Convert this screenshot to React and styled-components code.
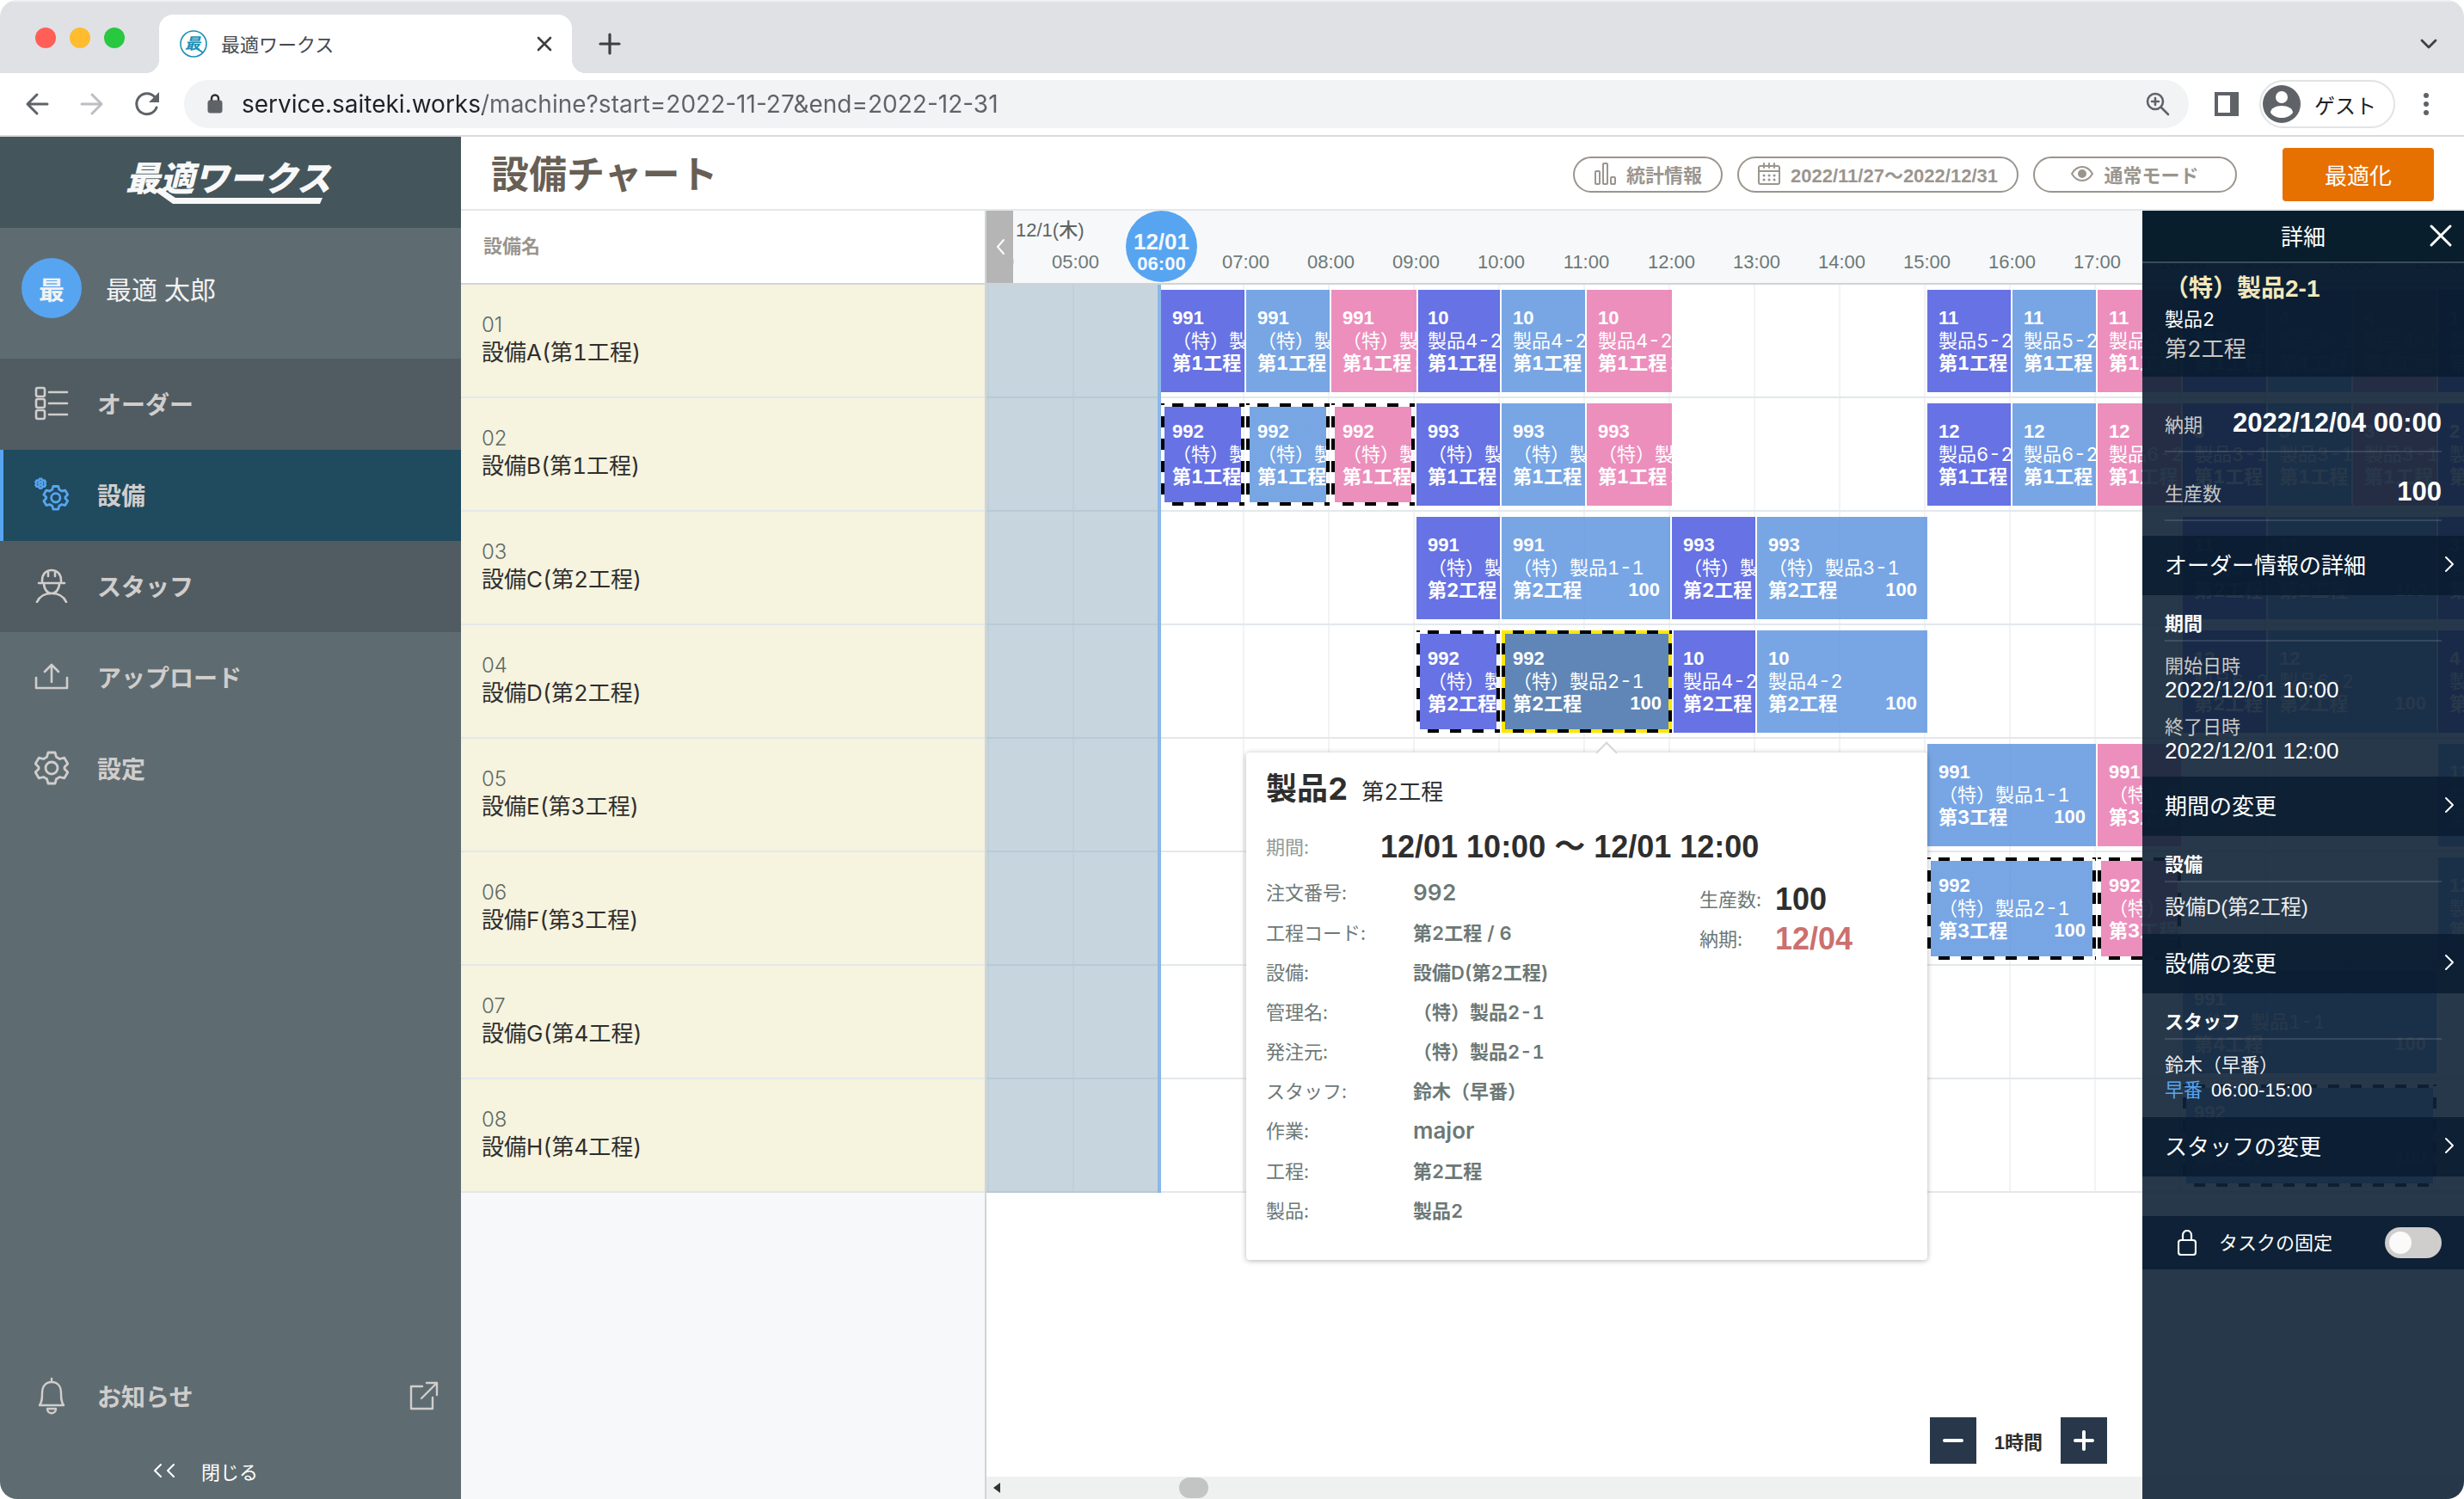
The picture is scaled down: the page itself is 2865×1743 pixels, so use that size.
import React from 'react';
import styled, { createGlobalStyle, css } from 'styled-components';

const jp = `Inter, "Noto Sans CJK JP", sans-serif`;
const helvetica = `"Liberation Sans", "Noto Sans CJK JP", sans-serif`;

const HOUR = 99;

const GlobalStyle = createGlobalStyle`
    * {
        box-sizing: border-box;
    }
    body {
        margin: 0;
        font-family: ${jp};
        font-size: 22px;
        font-variant-numeric: tabular-nums;
        color: #2e2e2e;
        background: #fff;
    }
    button, input {
        font: inherit;
        color: inherit;
        border: 0;
        padding: 0;
        margin: 0;
        background: none;
    }
    button {
        cursor: pointer;
    }
    svg {
        display: block;
        flex: none;
    }
    h1, h2, h3, p, dl, dd, dt, ul {
        margin: 0;
        padding: 0;
    }
    ul {
        list-style: none;
    }
    a {
        color: inherit;
        text-decoration: none;
    }
`;

/* ---------- browser ---------- */

const Window = styled.div`
    display: flex;
    flex-direction: column;
    height: 100vh;
    border-radius: 20px;
    overflow: hidden;
`;

const TabBar = styled.div`
    display: flex;
    align-items: flex-end;
    height: 85px;
    padding: 0 30px 0 41px;
    background: #dfe1e5;
    border-top: 2px solid #eff0f2;
`;

const Lights = styled.div`
    display: flex;
    gap: 16px;
    padding-bottom: 29px;
`;

const Light = styled.span`
    width: 24px;
    height: 24px;
    border-radius: 50%;
    background: ${({ $color }) => $color};
`;

const Tab = styled.div`
    position: relative;
    display: flex;
    align-items: center;
    width: 480px;
    height: 68px;
    margin-left: 40px;
    padding: 0 22px 0 24px;
    border-radius: 16px 16px 0 0;
    background: #fff;
    color: #45494d;
    &::before, &::after {
        content: '';
        position: absolute;
        bottom: 0;
        width: 16px;
        height: 16px;
    }
    &::before {
        left: -16px;
        background: radial-gradient(circle at 0 0, transparent 16px, #fff 16px);
    }
    &::after {
        right: -16px;
        background: radial-gradient(circle at 100% 0, transparent 16px, #fff 16px);
    }
`;

const TabTitle = styled.span`
    flex: 1;
    margin-left: 16px;
    padding-bottom: 2px;
`;

const IconButton = styled.button`
    display: flex;
    align-items: center;
    justify-content: center;
    color: ${({ $color }) => $color || '#5f6368'};
`;

const NewTab = styled(IconButton)`
    height: 68px;
    margin: 0 auto 0 30px;
`;

const TabSearch = styled(IconButton)`
    height: 68px;
`;

const Toolbar = styled.div`
    display: flex;
    align-items: center;
    height: 74px;
    padding: 0 40px 0 28px;
    border-bottom: 2px solid #d9dadc;
    background: #fff;
`;

const NavButtons = styled.div`
    display: flex;
    gap: 34px;
    margin-right: 28px;
`;

const AddressBar = styled.label`
    display: flex;
    flex: 1;
    align-items: center;
    height: 56px;
    padding: 0 20px 0 27px;
    border-radius: 28px;
    background: #f1f3f4;
`;

const AddressInput = styled.input`
    flex: 1;
    min-width: 0;
    margin-left: 22px;
    font-size: 28px;
    font-variant-numeric: normal;
    color: transparent;
    background: linear-gradient(to right, #202124 280px, #5f6368 280px);
    background-clip: text;
    outline: none;
`;

const SidePanelButton = styled(IconButton)`
    margin: 0 24px 0 30px;
`;

const GuestButton = styled.button`
    display: flex;
    align-items: center;
    gap: 16px;
    height: 56px;
    padding: 0 20px 0 2px;
    border: 2px solid #e1e3e6;
    border-radius: 28px;
    font-size: 24px;
    color: #202124;
`;

const MenuButton = styled(IconButton)`
    margin-left: 32px;
`;

/* ---------- side menu ---------- */

const Page = styled.div`
    display: flex;
    flex: 1;
    min-height: 0;
`;

const Sidebar = styled.nav`
    display: flex;
    flex-direction: column;
    flex: none;
    width: 536px;
    background: #5e6c72;
    color: #d0cdcb;
`;

const LogoBox = styled.div`
    display: flex;
    justify-content: center;
    padding: 20px 0;
    height: 106px;
    background: #44565c;
`;

const Profile = styled.div`
    display: flex;
    align-items: center;
    gap: 28px;
    height: 152px;
    padding: 0 25px 12px;
    font-size: 30px;
    color: #f2f2f2;
`;

const Avatar = styled.span`
    display: flex;
    align-items: center;
    justify-content: center;
    width: 70px;
    height: 70px;
    border-radius: 50%;
    background: #57a5f0;
    font-weight: 700;
`;

const MenuItem = styled.a`
    display: flex;
    align-items: center;
    gap: 33px;
    height: 106px;
    padding: 0 26px 2px 36px;
    border-left: 4px solid transparent;
    font-size: 28px;
    font-weight: 700;
    ${({ $sub }) => $sub && css`
        background: #515c62;
        border-color: #515c62;
    `}
    ${({ $active }) => $active && css`
        background: #204a5e;
        border-color: #57a5f0;
        svg {
            color: #57a5f0;
        }
    `}
`;

const MenuLabel = styled.span`
    flex: 1;
`;

const MenuSpacer = styled.div`
    flex: 1;
`;

const CloseMenu = styled.button`
    display: flex;
    align-items: center;
    justify-content: center;
    gap: 30px;
    height: 66px;
    padding-right: 58px;
    color: #fff;
`;

/* ---------- main ---------- */

const Main = styled.main`
    display: flex;
    flex-direction: column;
    flex: 1;
    min-width: 0;
`;

const PageHeader = styled.header`
    display: flex;
    align-items: center;
    gap: 17px;
    height: 86px;
    padding: 4px 35px 0;
    border-bottom: 2px solid #e3e8eb;
`;

const PageTitle = styled.h1`
    margin-right: auto;
    font-size: 44px;
    line-height: 60px;
    color: #685f55;
`;

const Pill = styled.button`
    display: flex;
    align-items: center;
    justify-content: center;
    gap: 12px;
    height: 42px;
    padding: 0 22px 2px;
    min-width: ${({ $wide }) => ($wide ? '237px' : '174px')};
    border: 2px solid #9b958e;
    border-radius: 21px;
    font-family: ${helvetica};
    font-weight: 700;
    color: #9b958e;
`;

const OptimizeButton = styled.button`
    width: 176px;
    height: 62px;
    margin-left: 36px;
    padding-bottom: 2px;
    border-radius: 4px;
    background: #e67000;
    color: #fff;
    font-size: 26px;
`;

const Board = styled.div`
    position: relative;
    display: flex;
    flex: 1;
    min-height: 0;
`;

const NameColumn = styled.section`
    flex: none;
    width: 611px;
    border-right: 2px solid #d0d4d4;
    background: #f7f8fa;
`;

const NameHeader = styled.h2`
    display: flex;
    align-items: center;
    height: 86px;
    padding: 0 26px 6px;
    border-bottom: 2px solid #d0d4d4;
    background: #fff;
    font-size: 22px;
    font-weight: 600;
    color: #99948e;
`;

const NameRow = styled.li`
    display: flex;
    flex-direction: column;
    justify-content: center;
    height: 132px;
    padding: 0 24px 4px;
    border-bottom: 2px solid #e3e8eb;
    background: #f6f3de;
    font-size: 26px;
    line-height: 32px;
`;

const MachineNo = styled.span`
    font-size: 24px;
    font-weight: 300;
    font-variant-numeric: normal;
    color: #5d6a68;
`;

const Timeline = styled.section`
    position: relative;
    display: flex;
    flex-direction: column;
    flex: 1;
    min-width: 0;
    overflow: hidden;
`;

const TimeHeader = styled.div`
    position: relative;
    display: flex;
    height: 86px;
    border-bottom: 2px solid #d0d4d4;
    background: #f7f8fa;
    font-family: ${helvetica};
    color: #6c7876;
`;

const Collapse = styled.button`
    display: flex;
    align-items: center;
    justify-content: center;
    flex: none;
    width: 31px;
    z-index: 1;
    background: #b5b5b5;
    color: #fff;
`;

const TimeLabels = styled.div`
    flex: 1;
    min-width: 0;
    padding-top: 6px;
`;

const DayLabel = styled.div`
    padding-left: 3px;
    line-height: 34px;
    font-weight: 500;
    color: #5d6664;
`;

const Hours = styled.ul`
    display: flex;
    margin-left: -76px;
`;

const Hour = styled.li`
    flex: none;
    width: ${HOUR}px;
    line-height: 40px;
    text-align: center;
`;

const NowMarker = styled.div`
    position: absolute;
    left: 162px;
    top: 0;
    display: flex;
    flex-direction: column;
    align-items: center;
    justify-content: center;
    width: 83px;
    height: 83px;
    padding-top: 14px;
    border-radius: 50%;
    background: #57a5f0;
    color: #f5f9fe;
    font-weight: 700;
    line-height: 26px;
`;

const NowDate = styled.span`
    font-size: 26px;
`;

const Lanes = styled.ul`
    position: relative;
`;

const Lane = styled.li`
    display: grid;
    grid-template-columns: 203px repeat(17, ${HOUR}px);
    height: 132px;
    padding-top: 6px;
    border-bottom: 2px solid #e3e8eb;
    background: repeating-linear-gradient(to right, #f2f3f4 0 2px, transparent 2px ${HOUR}px) 1px 0;
`;

const PastShade = styled.div`
    position: absolute;
    inset: 0 auto 0 0;
    width: 203px;
    border-right: 4px solid #8bb8e6;
    background: rgba(143, 172, 192, 0.5);
`;

const taskColors = {
    purple: 'rgba(65, 79, 221, 0.8)',
    blue: 'rgba(86, 144, 221, 0.8)',
    pink: 'rgba(231, 115, 172, 0.8)',
    selected: '#5f86b6',
};

// long dashes: 13px on, 13px off, on all four sides
const dashes = (direction, gapColor) => (
    `repeating-linear-gradient(${direction}, ${gapColor} 0 13px, #000 13px 26px)`
);

const dashedBorder = (fill, gapColor) => css`
    border: 4px solid transparent;
    background:
        linear-gradient(${fill}, ${fill}) padding-box,
        ${dashes('to right', gapColor)} 0 0 / 100% 4px no-repeat border-box,
        ${dashes('to right', gapColor)} 0 100% / 100% 4px no-repeat border-box,
        ${dashes('to top', gapColor)} 0 0 / 4px 100% no-repeat border-box,
        ${dashes('to top', gapColor)} 100% 0 / 4px 100% no-repeat border-box;
`;

const TaskBox = styled.button`
    display: flex;
    flex-direction: column;
    grid-row: 1;
    grid-column: ${({ $at, $span }) => `${$at + 2} / span ${$span}`};
    height: 119px;
    margin-left: ${({ $gap }) => ($gap ? 2 : 0)}px;
    margin-right: ${({ $end }) => ($end ? 0 : 2)}px;
    padding: 20px 12px 0 ${({ $gap }) => ($gap ? 11 : 13)}px;
    overflow: hidden;
    background: ${({ $color }) => taskColors[$color]};
    color: #fff;
    text-align: left;
    line-height: 26px;
    white-space: nowrap;
    ${({ $dashed, $color }) => $dashed && css`
        padding: 16px 8px 0 9px;
        ${dashedBorder(taskColors[$color], $color === 'selected' ? '#ffe600' : 'transparent')}
    `}
`;

const TaskNo = styled.b`
    font-family: ${helvetica};
`;

const TaskFoot = styled.b`
    display: flex;
    gap: 4px;
    justify-content: space-between;
    width: 100%;
`;

const TaskQty = styled.span`
    font-family: ${helvetica};
`;

const Blank = styled.div`
    flex: 1;
`;

const Scrollbar = styled.div`
    display: flex;
    align-items: center;
    height: 26px;
    padding-left: 8px;
    background: #eff1f1;
`;

const ScrollThumb = styled.span`
    width: 34px;
    height: 24px;
    margin-left: 208px;
    border-radius: 12px;
    background: #c3c4c4;
`;

const ZoomControls = styled.div`
    position: absolute;
    right: 415px;
    bottom: 41px;
    display: flex;
    align-items: center;
    gap: 21px;
    font-family: ${helvetica};
    font-weight: 700;
`;

const ZoomButton = styled.button`
    display: flex;
    align-items: center;
    justify-content: center;
    width: 54px;
    height: 54px;
    background: #28384a;
    color: #fff;
`;

/* ---------- popover ---------- */

const Popover = styled.article`
    position: absolute;
    left: 302px;
    top: 630px;
    width: 792px;
    padding: 20px 23px 34px;
    border-radius: 4px;
    background: #fff;
    box-shadow: 0 1px 6px rgba(0, 0, 0, 0.3);
    &::before {
        content: '';
        position: absolute;
        left: 410px;
        top: -9px;
        width: 16px;
        height: 16px;
        border: solid #d6d6d6;
        border-width: 2px 0 0 2px;
        background: #fff;
        transform: rotate(45deg);
    }
`;

const PopoverTitle = styled.h2`
    display: flex;
    align-items: baseline;
    gap: 16px;
    font-size: 36px;
    line-height: 44px;
`;

const PopoverStage = styled.span`
    font-size: 26px;
    font-weight: 400;
`;

const Period = styled.dl`
    display: grid;
    grid-template-columns: 133px 1fr;
    align-items: center;
    margin: 20px 0 8px;
    line-height: 44px;
    dt {
        color: #8f9a97;
    }
    dd {
        font-family: ${helvetica};
        font-size: 36px;
        font-weight: 700;
    }
`;

const PopoverColumns = styled.div`
    display: flex;
    align-items: flex-start;
`;

const InfoList = styled.dl`
    display: grid;
    grid-template-columns: 171px 333px;
    line-height: 46px;
    color: #6c7876;
    dd {
        font-weight: 600;
    }
`;

const Latin = styled.span`
    font-size: 26px;
`;

const StatList = styled.dl`
    display: grid;
    grid-template-columns: 88px 1fr;
    align-items: center;
    padding-top: 8px;
    line-height: 46px;
    color: #6c7876;
`;

const StatValue = styled.dd`
    font-family: ${helvetica};
    font-size: 36px;
    font-weight: 700;
    color: ${({ $late }) => ($late ? '#cb706f' : '#2e2e2e')};
`;

/* ---------- detail panel ---------- */

const Panel = styled.aside`
    position: absolute;
    inset: 0 0 0 auto;
    width: 374px;
    background: rgba(16, 34, 54, 0.9);
    color: #fff;
`;

const PanelHeader = styled.header`
    display: grid;
    grid-template-columns: 1fr auto 1fr;
    align-items: center;
    height: 61px;
    padding: 0 12px 2px;
    border-bottom: 2px solid #3a4b5b;
    background: #091e2d;
    h2 {
        grid-column: 2;
        font-size: 26px;
        font-weight: 400;
    }
`;

const PanelClose = styled.button`
    justify-self: end;
`;

const PanelSummary = styled.div`
    padding: 10px 26px 12px;
    background: rgba(8, 28, 48, 0.84);
    line-height: 30px;
`;

const PanelName = styled.h3`
    font-family: ${helvetica};
    font-size: 28px;
    line-height: 40px;
    color: #f3e8bb;
`;

const PanelStage = styled.p`
    font-size: 26px;
    line-height: 40px;
    color: #c9c8c4;
`;

const Facts = styled.dl`
    padding: 8px 26px 17px;
`;

const Fact = styled.div`
    display: flex;
    align-items: center;
    justify-content: space-between;
    height: 80px;
    padding-top: 14px;
    border-bottom: 2px solid rgba(255, 255, 255, 0.12);
    dt {
        color: #c9c8c4;
    }
    dd {
        font-family: ${helvetica};
        font-size: 31px;
        font-weight: 700;
    }
`;

const PanelButton = styled.button`
    display: flex;
    align-items: center;
    justify-content: space-between;
    width: 100%;
    height: 69px;
    padding: 0 11px 4px 26px;
    background: rgba(8, 28, 48, 0.84);
    font-size: 26px;
`;

const Section = styled.section`
    padding: 0 26px;
`;

const SectionTitle = styled.h3`
    display: flex;
    align-items: center;
    height: 54px;
    padding-top: 10px;
    border-bottom: 2px solid rgba(255, 255, 255, 0.12);
    font-size: 22px;
`;

const SectionBody = styled.div`
    display: flex;
    flex-direction: column;
    gap: ${({ $gap }) => $gap || 0}px;
    padding: 14px 0 16px;
    line-height: 30px;
    color: #eceded;
`;

const DateField = styled.div`
    line-height: 28px;
    dt {
        color: #c9c8c4;
    }
    dd {
        font-family: ${helvetica};
        font-size: 26px;
        color: #fff;
    }
`;

const MachineName = styled.p`
    font-family: ${helvetica};
    font-size: 24px;
`;

const Shift = styled.p`
    font-family: ${helvetica};
    color: #fff;
    span {
        margin-right: 10px;
        color: #57a5f0;
    }
`;

const LockRow = styled.label`
    display: flex;
    align-items: center;
    height: 62px;
    margin-top: 46px;
    padding: 0 26px 0 41px;
    background: #0e2136;
    span {
        flex: 1;
        margin-left: 26px;
        padding-bottom: 4px;
    }
`;

const Switch = styled.input`
    appearance: none;
    width: 66px;
    height: 36px;
    border-radius: 18px;
    background: #d0cecd;
    &::before {
        content: '';
        display: block;
        width: 26px;
        height: 26px;
        margin: 5px;
        border-radius: 50%;
        background: #fafafa;
    }
`;

/* ---------- icons ---------- */

const Icon = ({ size = 40, width, height, box = 40, stroke = 2, children }) => (
    <svg
        width={width || size}
        height={height || size}
        viewBox={typeof box === 'string' ? box : `0 0 ${box} ${box}`}
        fill="none"
        stroke="currentColor"
        strokeWidth={stroke}
        strokeLinecap="round"
        strokeLinejoin="round"
        aria-hidden="true"
    >
        {children}
    </svg>
);

const Chevron = ({ left }) => (
    <Icon width={12} height={20} box="0 0 12 20" stroke={2}>
        <path d={left ? 'M10 2L3 10l7 8' : 'M2 2l8 8-8 8'} />
    </Icon>
);

const gear = 'M16 2h8l1.5 5.2 4 2.3 5.3-1.3 4 6.8-3.8 4v2l3.8 4-4 6.8-5.3-1.3-4 2.3L24 38h-8l-1.5-5.2-4-2.3-5.3 1.3-4-6.8 3.8-4v-2l-3.8-4 4-6.8 5.3 1.3 4-2.3z';

const OrderIcon = () => (
    <Icon stroke={2.6}>
        {[2, 15, 28].map((y) => (
            <g key={y}>
                <rect x="2" y={y} width="10" height="10" rx="2" />
                <path d={`M17 ${y + 5}h21`} />
            </g>
        ))}
    </Icon>
);

const GearIcon = () => (
    <Icon stroke={2.8}>
        <path d={gear} />
        <circle cx="20" cy="20" r="7" />
    </Icon>
);

const MachineIcon = () => (
    <Icon stroke={2.4}>
        <g transform="translate(10 9) scale(0.74)" strokeWidth="3.8">
            <path d={gear} />
            <circle cx="20" cy="20" r="7" />
        </g>
        <g transform="translate(1 1) scale(0.31)" strokeWidth="8">
            <path d={gear} />
            <circle cx="20" cy="20" r="6" />
        </g>
    </Icon>
);

const StaffIcon = () => (
    <Icon stroke={2.6}>
        <path d="M5 17h30M9 17v-3C9 7 13 2 20 2s11 5 11 12v3M16 3v6M24 3v6M11 17c0 7 4 12 9 12s9-5 9-12M3 39c3-7 9-10 17-10s14 3 17 10" />
    </Icon>
);

const UploadIcon = () => (
    <Icon stroke={2.6}>
        <path d="M2 21v12h36V21M20 26V6M12 14l8-8 8 8" />
    </Icon>
);

const BellIcon = () => (
    <Icon width={40} height={44} box="0 0 40 44" stroke={2.4}>
        <path d="M20 2v4M6 33c3-4 3-8 3-14C9 11 13 6 20 6s11 5 11 13c0 6 0 10 3 14zM15 37c0 7 10 7 10 0z" />
    </Icon>
);

const ExternalIcon = () => (
    <Icon size={34} box={34} stroke={2.4}>
        <path d="M15 6H2v26h25V19M20 2h12v14M32 2L14 20" />
    </Icon>
);

const Favicon = () => (
    <svg width="32" height="32" viewBox="0 0 32 32" aria-hidden="true">
        <circle cx="16" cy="16" r="15" fill="#fff" stroke="#1b8fb5" strokeWidth="1.6" />
        <text x="15" y="22" textAnchor="middle" fontFamily="Noto Sans CJK JP" fontSize="18" fontWeight="700" fontStyle="italic" fill="#1b8fb5">最</text>
        <path d="M19 21l8 5" stroke="#1b8fb5" strokeWidth="2" />
    </svg>
);

const Logo = () => (
    <svg width="244" height="60" viewBox="0 0 244 60" role="img" aria-label="最適ワークス">
        <text x="0" y="43" fontFamily="Noto Sans CJK JP" fontSize="40" fontWeight="900" fontStyle="italic" fill="#f8f8f9">最適ワークス</text>
        <path d="M34 43l6-4 18 12h171l-3 7H55z" fill="#f8f8f9" />
    </svg>
);

/* ---------- data ---------- */

const sub1 = '（特）製品1-1';
const sub2 = '（特）製品2-1';
const sub3 = '（特）製品3-1';

const trio = (at, no, name, extra = {}) => ['purple', 'blue', 'pink'].map((color, i) => ({
    at: at + i,
    no,
    name,
    stage: '第1工程',
    color,
    dashed: extra.dashed,
    gap: extra.gap && i === 0,
    end: extra.end && i === 2,
}));

const machines = [
    {
        no: '01',
        name: '設備A(第1工程)',
        tasks: [
            ...trio(0, '991', sub1, { end: true }),
            ...trio(3, '10', '製品4-2', { gap: true, end: true }),
            ...trio(9, '11', '製品5-2'),
            ...trio(12, '4', '製品4-1'),
            { at: 15, no: '1', name: '製品1-1', stage: '第1工程', color: 'purple' },
        ],
    },
    {
        no: '02',
        name: '設備B(第1工程)',
        tasks: [
            ...trio(0, '992', sub2, { dashed: true }),
            ...trio(3, '993', sub3, { end: true }),
            ...trio(9, '12', '製品6-2'),
            ...trio(12, '3', '製品3-1'),
            { at: 15, no: '2', name: '製品2-1', stage: '第1工程', color: 'purple' },
        ],
    },
    {
        no: '03',
        name: '設備C(第2工程)',
        tasks: [
            { at: 3, no: '991', name: sub1, stage: '第2工程', color: 'purple' },
            { at: 4, span: 2, no: '991', name: sub1, stage: '第2工程', color: 'blue' },
            { at: 6, no: '993', name: sub3, stage: '第2工程', color: 'purple' },
            { at: 7, span: 2, no: '993', name: sub3, stage: '第2工程', color: 'blue', end: true },
            { at: 12, no: '11', name: '製品5-2', stage: '第2工程', color: 'purple' },
            { at: 13, span: 2, no: '11', name: '製品5-2', stage: '第2工程', color: 'blue' },
            { at: 15, no: '3', name: '製品3-1', stage: '第2工程', color: 'purple' },
        ],
    },
    {
        no: '04',
        name: '設備D(第2工程)',
        tasks: [
            { at: 3, no: '992', name: sub2, stage: '第2工程', color: 'purple', dashed: true },
            { at: 4, span: 2, no: '992', name: sub2, stage: '第2工程', color: 'selected', dashed: true, end: true },
            { at: 6, no: '10', name: '製品4-2', stage: '第2工程', color: 'purple', gap: true },
            { at: 7, span: 2, no: '10', name: '製品4-2', stage: '第2工程', color: 'blue', end: true },
            { at: 12, no: '12', name: '製品6-2', stage: '第2工程', color: 'purple' },
            { at: 13, span: 2, no: '12', name: '製品6-2', stage: '第2工程', color: 'blue' },
            { at: 15, no: '4', name: '製品4-1', stage: '第2工程', color: 'purple' },
        ],
    },
    {
        no: '05',
        name: '設備E(第3工程)',
        tasks: [
            { at: 9, span: 2, no: '991', name: sub1, stage: '第3工程', color: 'blue' },
            { at: 11, no: '991', name: sub1, stage: '第3工程', color: 'pink' },
            { at: 15, span: 2, no: '11', name: '製品5-2', stage: '第3工程', color: 'blue' },
        ],
    },
    {
        no: '06',
        name: '設備F(第3工程)',
        tasks: [
            { at: 9, span: 2, no: '992', name: sub2, stage: '第3工程', color: 'blue', dashed: true },
            { at: 11, no: '992', name: sub2, stage: '第3工程', color: 'pink', dashed: true },
            { at: 15, span: 2, no: '12', name: '製品6-2', stage: '第3工程', color: 'blue' },
        ],
    },
    {
        no: '07',
        name: '設備G(第4工程)',
        tasks: [{ at: 12, span: 3, no: '991', name: sub1, stage: '第4工程', color: 'blue' }],
    },
    {
        no: '08',
        name: '設備H(第4工程)',
        tasks: [{ at: 12, span: 3, no: '992', name: sub2, stage: '第4工程', color: 'blue', dashed: true }],
    },
];

const hours = Array.from({ length: 18 }, (_, i) => `${String(i + 4).padStart(2, '0')}:00`);

const info = [
    ['注文番号:', <Latin>992</Latin>],
    ['工程コード:', '第2工程 / 6'],
    ['設備:', '設備D(第2工程)'],
    ['管理名:', sub2],
    ['発注元:', sub2],
    ['スタッフ:', '鈴木（早番）'],
    ['作業:', <Latin>major</Latin>],
    ['工程:', '第2工程'],
    ['製品:', '製品2'],
];

/* ---------- components ---------- */

const BrowserBar = () => (
    <>
        <TabBar>
            <Lights>
                <Light $color="#ff5f57" />
                <Light $color="#febc2e" />
                <Light $color="#28c840" />
            </Lights>
            <Tab>
                <Favicon />
                <TabTitle>最適ワークス</TabTitle>
                <IconButton aria-label="タブを閉じる" $color="#3c4043">
                    <Icon size={20} box={20} stroke={2.6}><path d="M3 3l14 14M17 3L3 17" /></Icon>
                </IconButton>
            </Tab>
            <NewTab aria-label="新しいタブ" $color="#3c4043">
                <Icon size={28} box={28} stroke={3.2}><path d="M14 3v22M3 14h22" /></Icon>
            </NewTab>
            <TabSearch aria-label="タブを検索" $color="#3c4043">
                <Icon size={22} box={22} stroke={2.8}><path d="M3 7l8 8 8-8" /></Icon>
            </TabSearch>
        </TabBar>
        <Toolbar>
            <NavButtons>
                <IconButton aria-label="戻る">
                    <Icon size={30} box={30} stroke={3}><path d="M27 15H4M15 4L4 15l11 11" /></Icon>
                </IconButton>
                <IconButton aria-label="進む" $color="#bcbec1">
                    <Icon size={30} box={30} stroke={3}><path d="M3 15h23M15 4l11 11-11 11" /></Icon>
                </IconButton>
                <IconButton aria-label="再読み込み">
                    <Icon size={30} box={30} stroke={3}>
                        <path d="M26 19A12 12 0 1 1 24 7" />
                        <path d="M29 1v12H17z" fill="currentColor" stroke="none" />
                    </Icon>
                </IconButton>
            </NavButtons>
            <AddressBar>
                <Icon width={18} height={24} box="0 0 18 24" stroke={2.4}>
                    <path d="M5 9V5.5a4 4 0 0 1 8 0V9" />
                    <rect x="1" y="8" width="16" height="14" rx="2" fill="#5f6368" stroke="#5f6368" strokeWidth="1" />
                </Icon>
                <AddressInput
                    aria-label="アドレス"
                    defaultValue="service.saiteki.works/machine?start=2022-11-27&end=2022-12-31"
                />
                <IconButton aria-label="ズーム">
                    <Icon size={32} box={32} stroke={2.6}>
                        <circle cx="13" cy="13" r="9" />
                        <path d="M20 20l8 8M13 9v8M9 13h8" />
                    </Icon>
                </IconButton>
            </AddressBar>
            <SidePanelButton aria-label="サイドパネル">
                <Icon width={28} height={28} box="0 0 28 28" stroke={0}>
                    <path fillRule="evenodd" d="M0 0h28v28H0zM4 4v20h14V4z" fill="currentColor" />
                </Icon>
            </SidePanelButton>
            <GuestButton>
                <svg width="44" height="44" viewBox="0 0 44 44" aria-hidden="true">
                    <circle cx="22" cy="22" r="22" fill="#5f6368" />
                    <circle cx="22" cy="14" r="7" fill="#fff" />
                    <path d="M9 32c0-5 6-8 13-8s13 3 13 8c-3 4-8 6-13 6s-10-2-13-6z" fill="#fff" />
                </svg>
                ゲスト
            </GuestButton>
            <MenuButton aria-label="メニュー">
                <svg width="8" height="28" viewBox="0 0 8 28" fill="currentColor" aria-hidden="true">
                    <circle cx="4" cy="4" r="3" />
                    <circle cx="4" cy="14" r="3" />
                    <circle cx="4" cy="24" r="3" />
                </svg>
            </MenuButton>
        </Toolbar>
    </>
);

const SideMenu = () => (
    <Sidebar>
        <LogoBox><Logo /></LogoBox>
        <Profile>
            <Avatar>最</Avatar>
            最適 太郎
        </Profile>
        <MenuItem href="#order" $sub><OrderIcon /><MenuLabel>オーダー</MenuLabel></MenuItem>
        <MenuItem href="#machine" $active><MachineIcon /><MenuLabel>設備</MenuLabel></MenuItem>
        <MenuItem href="#staff" $sub><StaffIcon /><MenuLabel>スタッフ</MenuLabel></MenuItem>
        <MenuItem href="#upload"><UploadIcon /><MenuLabel>アップロード</MenuLabel></MenuItem>
        <MenuItem href="#settings"><GearIcon /><MenuLabel>設定</MenuLabel></MenuItem>
        <MenuSpacer />
        <MenuItem href="#news"><BellIcon /><MenuLabel>お知らせ</MenuLabel><ExternalIcon /></MenuItem>
        <CloseMenu>
            <Icon width={26} height={18} box="0 0 26 18" stroke={2}>
                <path d="M9 2L2 9l7 7M24 2l-7 7 7 7" />
            </Icon>
            閉じる
        </CloseMenu>
    </Sidebar>
);

const Task = ({ at, span = 1, no, name, stage, color, dashed, gap, end }) => (
    <TaskBox $at={at} $span={span} $color={color} $dashed={dashed} $gap={gap} $end={end}>
        <TaskNo>{no}</TaskNo>
        <span>{name}</span>
        <TaskFoot>
            <span>{stage}</span>
            <TaskQty>100</TaskQty>
        </TaskFoot>
    </TaskBox>
);

const TaskPopover = () => (
    <Popover>
        <PopoverTitle>製品2 <PopoverStage>第2工程</PopoverStage></PopoverTitle>
        <Period>
            <dt>期間:</dt>
            <dd>12/01 10:00 〜 12/01 12:00</dd>
        </Period>
        <PopoverColumns>
            <InfoList>
                {info.map(([label, value]) => (
                    <React.Fragment key={label}>
                        <dt>{label}</dt>
                        <dd>{value}</dd>
                    </React.Fragment>
                ))}
            </InfoList>
            <StatList>
                <dt>生産数:</dt>
                <StatValue>100</StatValue>
                <dt>納期:</dt>
                <StatValue $late>12/04</StatValue>
            </StatList>
        </PopoverColumns>
    </Popover>
);

const DetailPanel = () => (
    <Panel>
        <PanelHeader>
            <h2>詳細</h2>
            <PanelClose aria-label="閉じる">
                <Icon size={30} box={30} stroke={3}><path d="M4 4l22 22M26 4L4 26" /></Icon>
            </PanelClose>
        </PanelHeader>
        <PanelSummary>
            <PanelName>{sub2}</PanelName>
            <p>製品2</p>
            <PanelStage>第2工程</PanelStage>
        </PanelSummary>
        <Facts>
            <Fact><dt>納期</dt><dd>2022/12/04 00:00</dd></Fact>
            <Fact><dt>生産数</dt><dd>100</dd></Fact>
        </Facts>
        <PanelButton>オーダー情報の詳細<Chevron /></PanelButton>
        <Section>
            <SectionTitle>期間</SectionTitle>
            <SectionBody as="dl" $gap={15}>
                <DateField><dt>開始日時</dt><dd>2022/12/01 10:00</dd></DateField>
                <DateField><dt>終了日時</dt><dd>2022/12/01 12:00</dd></DateField>
            </SectionBody>
        </Section>
        <PanelButton>期間の変更<Chevron /></PanelButton>
        <Section>
            <SectionTitle>設備</SectionTitle>
            <SectionBody>
                <MachineName>設備D(第2工程)</MachineName>
            </SectionBody>
        </Section>
        <PanelButton>設備の変更<Chevron /></PanelButton>
        <Section>
            <SectionTitle>スタッフ</SectionTitle>
            <SectionBody>
                <p>鈴木（早番）</p>
                <Shift><span>早番</span>06:00-15:00</Shift>
            </SectionBody>
        </Section>
        <PanelButton>スタッフの変更<Chevron /></PanelButton>
        <LockRow>
            <Icon width={22} height={30} box="0 0 22 30" stroke={2.2}>
                <rect x="1" y="12" width="20" height="17" rx="3" />
                <path d="M6 12V6a5 5 0 0 1 10 0v6" />
            </Icon>
            <span>タスクの固定</span>
            <Switch type="checkbox" role="switch" />
        </LockRow>
    </Panel>
);

const App = () => (
    <Window>
        <GlobalStyle />
        <BrowserBar />
        <Page>
            <SideMenu />
            <Main>
                <PageHeader>
                    <PageTitle>設備チャート</PageTitle>
                    <Pill>
                        <Icon width={26} height={26} box="0 0 26 26" stroke={2}>
                            <rect x="2" y="10" width="5" height="15" rx="1" />
                            <rect x="11" y="1" width="5" height="24" rx="1" />
                            <rect x="20" y="17" width="5" height="8" rx="1" />
                        </Icon>
                        統計情報
                    </Pill>
                    <Pill>
                        <Icon width={26} height={26} box="0 0 26 26" stroke={2}>
                            <rect x="1" y="4" width="24" height="21" rx="2" />
                            <path d="M1 10h24M7 1v5M13 1v5M19 1v5" />
                            <path d="M7 15h.1M13 15h.1M19 15h.1M7 20h.1M13 20h.1M19 20h.1" strokeWidth="3" />
                        </Icon>
                        2022/11/27〜2022/12/31
                    </Pill>
                    <Pill $wide>
                        <Icon width={26} height={20} box="0 0 26 20" stroke={2}>
                            <path d="M1 10c3-5 7-8 12-8s9 3 12 8c-3 5-7 8-12 8S4 15 1 10z" />
                            <circle cx="13" cy="10" r="4" fill="currentColor" />
                        </Icon>
                        通常モード
                    </Pill>
                    <OptimizeButton>最適化</OptimizeButton>
                </PageHeader>
                <Board>
                    <NameColumn>
                        <NameHeader>設備名</NameHeader>
                        <ul>
                            {machines.map((m) => (
                                <NameRow key={m.no}>
                                    <MachineNo>{m.no}</MachineNo>
                                    {m.name}
                                </NameRow>
                            ))}
                        </ul>
                    </NameColumn>
                    <Timeline>
                        <TimeHeader>
                            <Collapse aria-label="列を閉じる"><Chevron left /></Collapse>
                            <TimeLabels>
                                <DayLabel>12/1(木)</DayLabel>
                                <Hours>
                                    {hours.map((h) => <Hour key={h}>{h}</Hour>)}
                                </Hours>
                            </TimeLabels>
                            <NowMarker>
                                <NowDate>12/01</NowDate>
                                <span>06:00</span>
                            </NowMarker>
                        </TimeHeader>
                        <Lanes>
                            {machines.map((m) => (
                                <Lane key={m.no}>
                                    {m.tasks.map((t) => <Task key={t.at} {...t} />)}
                                </Lane>
                            ))}
                            <PastShade />
                        </Lanes>
                        <Blank />
                        <Scrollbar>
                            <svg width="8" height="12" viewBox="0 0 8 12" aria-hidden="true"><path d="M8 0v12L0 6z" fill="#333" /></svg>
                            <ScrollThumb />
                        </Scrollbar>
                        <TaskPopover />
                        <ZoomControls>
                            <ZoomButton aria-label="縮小">
                                <Icon size={26} box={26} stroke={4}><path d="M3 13h20" /></Icon>
                            </ZoomButton>
                            1時間
                            <ZoomButton aria-label="拡大">
                                <Icon size={26} box={26} stroke={4}><path d="M3 13h20M13 3v20" /></Icon>
                            </ZoomButton>
                        </ZoomControls>
                    </Timeline>
                    <DetailPanel />
                </Board>
            </Main>
        </Page>
    </Window>
);

export default App;
